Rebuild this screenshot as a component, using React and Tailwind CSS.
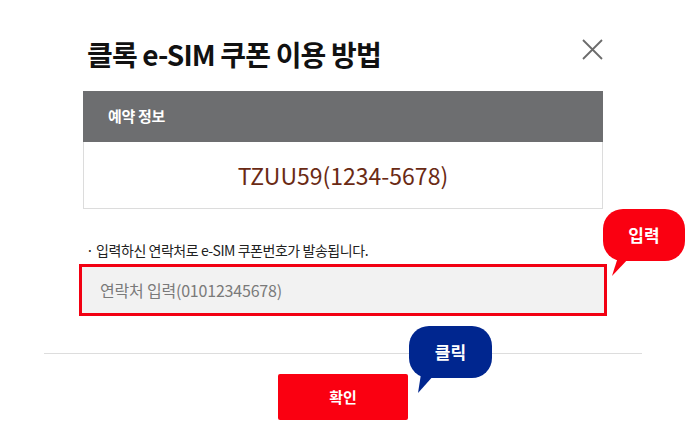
export default function App() {
  return (
    <div className="relative w-[686px] h-[439px] bg-white overflow-hidden font-['Noto_Sans_CJK_KR','Noto_Sans',sans-serif]">
      <div className="w-[598px] mx-auto">
        <div className="px-[39px]">
          <div className="flex items-start justify-between mt-[36px]">
            <h1 className="pl-[4px] text-[28px] leading-[36px] font-bold text-[#111] tracking-[-0.85px]">
              클록 e-SIM 쿠폰 이용 방법
            </h1>
            <button className="mt-[3px] w-[21px] h-[21px]">
              <svg width="21" height="21" viewBox="0 0 21 21">
                <path d="M1 1 L20 20 M20 1 L1 20" stroke="#6b6b6b" strokeWidth="1.8" fill="none" />
              </svg>
            </button>
          </div>

          <div className="mt-[19px]">
            <div className="h-[51px] bg-[#6d6e70] flex items-center pl-[25px]">
              <span className="text-white text-[15px] font-bold tracking-[-0.3px]">예약 정보</span>
            </div>
            <div className="h-[67px] border border-t-0 border-[#dcdcdc] flex items-center justify-center">
              <span className="text-[23px] text-[#6a2a14]">TZUU59(1234-5678)</span>
            </div>
          </div>

          <p className="mt-[31px] text-[14px] leading-[20px] text-[#222] pl-[3px] tracking-[-0.45px]">
            · 입력하신 연락처로 e-SIM 쿠폰번호가 발송됩니다.
          </p>

          <div className="mt-[4px] mx-[-4px] h-[52px] border-[3px] border-[#f20012] bg-[#f2f2f2] flex items-center pl-[18px]">
            <span className="text-[16px] text-[#7a7a7a] tracking-[-0.2px]">연락처 입력(01012345678)</span>
          </div>
        </div>

        <div className="mt-[37px] h-px bg-[#dddddd]" />

        <div className="flex justify-center mt-[20px]">
          <button className="w-[130px] h-[46px] rounded-[2px] bg-[#fa0011] text-white text-[15px] font-bold">
            확인
          </button>
        </div>
      </div>

      {/* 입력 bubble */}
      <div className="absolute left-[603px] top-[209px] w-[82px] h-[52px] rounded-[20px] bg-[#fa0011] flex items-center justify-center">
        <span className="text-white text-[17px] font-bold">입력</span>
      </div>
      <svg className="absolute left-0 top-0" width="686" height="439" style={{ pointerEvents: "none" }}>
        <polygon points="618,257 630,257 612,276" fill="#fa0011" />
        <polygon points="421,374 435,374 418,393" fill="#00268f" />
      </svg>

      {/* 클릭 bubble */}
      <div className="absolute left-[409px] top-[326px] w-[83px] h-[52px] rounded-[20px] bg-[#00268f] flex items-center justify-center">
        <span className="text-white text-[17px] font-bold">클릭</span>
      </div>
    </div>
  );
}
